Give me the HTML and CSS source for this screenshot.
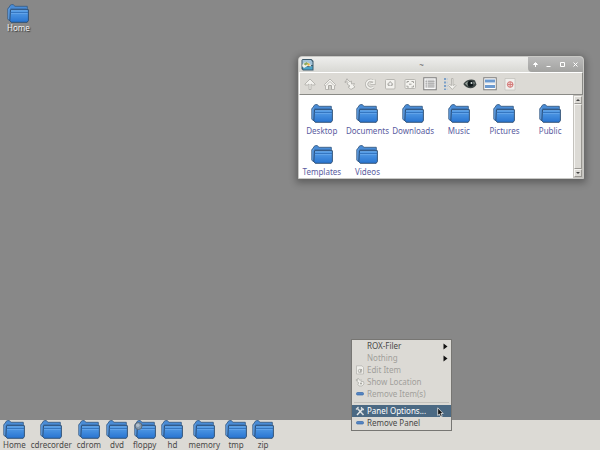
FILE: index.html
```html
<!DOCTYPE html>
<html lang="en">
<head>
<meta charset="utf-8">
<title>Desktop</title>
<link rel="stylesheet" href="styles.css">
</head>
<body>
<svg class="defs" aria-hidden="true">
  <defs>
    <linearGradient id="front" x1="0" y1="0" x2="0" y2="1">
      <stop offset="0" stop-color="#5aa2ea"/><stop offset="1" stop-color="#2874d0"/>
    </linearGradient>
    <symbol id="folder" viewBox="0 0 22 20">
      <path d="M2 16.500L.8 15V4.500L2 3.500 3 1.500 4.500.6h1.700L8 2.300h12.300V16z" fill="#4a8cd6" stroke="#3b5f86" stroke-width=".9"/>
      <path d="M1.800 15V5l1.400-1" fill="none" stroke="#6ca6e2" stroke-width=".8"/>
      <path d="M3.500 4.500h16" stroke="#3f78b8"/>
      <path d="M3.500 5.700h17.900v10.800l-1.200 1.800H4.200L2.800 16.500z" fill="url(#front)" stroke="#29486c" stroke-width=".9"/>
      <path d="M3.500 8.500h17.500" stroke="#2f6db6" stroke-width=".8"/>
      <path d="M4 9.500h16.500M4 6.700h16.500" stroke="#74b0f0" stroke-width=".8" opacity=".7"/>
    </symbol>
    <symbol id="minus" viewBox="0 0 8 4">
      <rect x=".5" y=".5" width="7" height="2.500" rx="1" fill="#5485c4" stroke="#3767a7" stroke-width=".7"/>
    </symbol>
  </defs>
</svg>

<main class="desktop">
  <a class="item pinned" href="#home"><svg class="folder"><use href="#folder"/></svg><span>Home</span></a>

  <section class="window">
    <header class="titlebar">
      <svg class="app-icon" viewBox="0 0 13 13">
        <path d="M.5 2.500l1-1.500h9l2 2v9.500H2L.5 11z" fill="#3c5a6c"/>
        <path d="M1.500 2h8.500l1.500 2v3h-10z" fill="#a3c3d8"/>
        <path d="M1.500 9.500l3-1.500 3 1 4-1v3.500h-9z" fill="#4aa3c8"/>
        <path d="M1 8c1-4 5-5 8-2l1.500 2.500-4-.5L3 10z" fill="#f1f1e8"/>
        <path d="M2.500 6l3-2 2 1.500-3 2z" fill="#8aa860"/>
        <circle cx="7.500" cy="6.500" r="1.200" fill="#e4b545"/>
      </svg>
      <h1 class="title">~</h1>
      <div class="controls">
        <button aria-label="Shade"><svg viewBox="0 0 7 7"><path d="M3.500 6V2M1.500 3.500l2-2 2 2z"/></svg></button>
        <button aria-label="Minimize"><svg viewBox="0 0 7 7"><path d="M1.500 5.500h4"/></svg></button>
        <button aria-label="Maximize"><svg viewBox="0 0 7 7"><path d="M1.500 1.500h4v4h-4z"/></svg></button>
        <button aria-label="Close"><svg viewBox="0 0 7 7"><path d="M1.500 1.500l4 4M5.500 1.500l-4 4"/></svg></button>
      </div>
    </header>

    <nav class="toolbar">
      <button aria-label="Up"><svg viewBox="0 0 14 14"><path class="pale" d="M7 2L2 7v1h2.500L6 7v5.500h2V7l1.500 1H12V7z"/></svg></button>
      <button aria-label="Home"><svg viewBox="0 0 14 14"><path class="pale" d="M7 2L1.500 7.500v1h1v4h9v-4h1v-1L7 2z"/><path d="M3 8.500l4-4 4 4" fill="none" stroke="#c0bfba"/><path d="M5.500 12.500v-4h3v4" fill="#d0cfca" stroke="#aaa9a4"/></svg></button>
      <button aria-label="Bookmarks"><svg viewBox="0 0 14 14"><path class="pale" d="M4 2l3 3 1.500-1v3l3-.5-1 2 1.500 1.500-4 2.500-3-2.500 2-1-3-2 1-1.500-2-2z"/><circle cx="4" cy="2.500" r="1" fill="#b5b4af"/><circle cx="2.500" cy="5" r="1" fill="#b5b4af"/></svg></button>
      <button aria-label="Rescan"><svg viewBox="0 0 14 14"><path d="M10 4A4 4 0 1 0 10.500 10M11 2.500v4H7.500" fill="none" stroke="#aeada8" stroke-width="3"/><path d="M10 4A4 4 0 1 0 10.500 10M11 2.500v4H7.500" fill="none" stroke="#f3f2ee" stroke-width="1.700"/></svg></button>
      <button aria-label="Icon size"><svg viewBox="0 0 14 14"><rect class="pale" x="2.500" y="2.500" width="9.500" height="9.500" rx="1"/><path d="M7.200 4l3 3-1 2H5.200l-1-2z" fill="#adaca7"/><path d="M7.200 5.500v3M5.700 7h3" stroke="#fff"/></svg></button>
      <button aria-label="Auto size"><svg viewBox="0 0 14 14"><rect class="pale" x="2" y="2.500" width="10.500" height="9" rx="1"/><path d="M4 6V4.500h2M8.500 4.500h2V6M10.500 8.500V10h-2M6 10H4V8.500M6 7.200h2.500" fill="none" stroke="#a3a29d"/></svg></button>
      <button aria-label="Details"><svg viewBox="0 0 14 14"><rect x=".75" y=".75" width="12.500" height="12" fill="#fafafa" stroke="#7d7d7d"/><path d="M2.500 2.500h9v8.500h-9z" fill="#ccc"/><path d="M2.500 4.500h9M2.500 6.700h9M2.500 9h9" stroke="#a2a2a2" stroke-width=".7"/><path d="M4.500 2.500V11" stroke="#e9e9e9" stroke-width=".7"/></svg></button>
      <button aria-label="Sort"><svg viewBox="0 0 14 14"><path d="M2 1v12" stroke="#7ca0c8" stroke-width="2" stroke-dasharray="2 1.500"/><path d="M4.200 1v12" stroke="#bccada" stroke-dasharray="2 1.500"/><path class="pale" d="M8.500 1.500h1.500v7l2-1 1 1-3.700 4-3.700-4 1-1 2 1z"/></svg></button>
      <button aria-label="Show hidden"><svg viewBox="0 0 14 14"><path d="M.3 7C3 2.500 9 1.500 12 3.500l1.500 4c-2 4.500-9 5.500-13.200-.5z" fill="#3d4645"/><path d="M2 6.500c3-3 7-3 10-.5-3 4-7 4-10 .5z" fill="#98a29c"/><circle cx="7.500" cy="6.800" r="3" fill="#10191b"/><circle cx="8.500" cy="6" r="1" fill="#d9e2df"/></svg></button>
      <button aria-label="Select all"><svg viewBox="0 0 14 14"><rect x=".75" y=".75" width="12.500" height="12" fill="#fff" stroke="#7d7d7d"/><path d="M2 4h10M2 9.500h10" stroke="#6c9acf" stroke-width="3"/><path d="M2 6.800h10" stroke="#e4e4e4"/></svg></button>
      <button aria-label="Help"><svg viewBox="0 0 14 14"><path d="M2 1.500h10v11.500H2z" fill="#f0efec" stroke="#c4c3be" stroke-width=".8"/><circle cx="7.200" cy="7.500" r="2.800" fill="#f3dedc" stroke="#d16f6f"/><path d="M4.500 7.500h5.500M7.200 5v5" stroke="#d37c79"/></svg></button>
    </nav>

    <div class="viewport">
      <div class="files">
        <a class="item" href="#desktop"><svg class="folder"><use href="#folder"/></svg><span>Desktop</span></a>
        <a class="item" href="#documents"><svg class="folder"><use href="#folder"/></svg><span>Documents</span></a>
        <a class="item" href="#downloads"><svg class="folder"><use href="#folder"/></svg><span>Downloads</span></a>
        <a class="item" href="#music"><svg class="folder"><use href="#folder"/></svg><span>Music</span></a>
        <a class="item" href="#pictures"><svg class="folder"><use href="#folder"/></svg><span>Pictures</span></a>
        <a class="item" href="#public"><svg class="folder"><use href="#folder"/></svg><span>Public</span></a>
        <a class="item" href="#templates"><svg class="folder"><use href="#folder"/></svg><span>Templates</span></a>
        <a class="item" href="#videos"><svg class="folder"><use href="#folder"/></svg><span>Videos</span></a>
      </div>
      <div class="scrollbar">
        <button aria-label="Scroll up"><svg viewBox="0 0 6 6"><path d="M1 4l2-2 2 2z"/></svg></button>
        <div class="thumb"></div>
        <button aria-label="Scroll down"><svg viewBox="0 0 6 6"><path d="M1 2l2 2 2-2z"/></svg></button>
      </div>
    </div>
  </section>

  <nav class="panel">
    <a class="item" href="#home"><svg class="folder"><use href="#folder"/></svg><span>Home</span></a>
    <a class="item" href="#cdrecorder"><svg class="folder"><use href="#folder"/></svg><span>cdrecorder</span></a>
    <a class="item" href="#cdrom"><svg class="folder"><use href="#folder"/></svg><span>cdrom</span></a>
    <a class="item" href="#dvd"><svg class="folder"><use href="#folder"/></svg><span>dvd</span></a>
    <a class="item" href="#floppy"><svg class="folder" viewBox="0 0 22 20"><use href="#folder" width="22" height="20"/><circle cx="4.500" cy="6" r="3.500" fill="#8199b0" stroke="#5f6b77"/><circle cx="3.800" cy="5.200" r="1.800" fill="#b0bdca"/></svg><span>floppy</span></a>
    <a class="item" href="#hd"><svg class="folder"><use href="#folder"/></svg><span>hd</span></a>
    <a class="item" href="#memory"><svg class="folder"><use href="#folder"/></svg><span>memory</span></a>
    <a class="item" href="#tmp"><svg class="folder"><use href="#folder"/></svg><span>tmp</span></a>
    <a class="item" href="#zip"><svg class="folder"><use href="#folder"/></svg><span>zip</span></a>
  </nav>

  <div class="menu">
    <button><i></i><span>ROX-Filer</span><svg class="arrow" viewBox="0 0 5 7"><path d="M.5 .5l4 3-4 3z"/></svg></button>
    <button class="off"><i></i><span>Nothing</span><svg class="arrow" viewBox="0 0 5 7"><path d="M.5 .5l4 3-4 3z"/></svg></button>
    <button class="off"><i><svg viewBox="0 0 10 10"><path d="M1.500 .8h5.500L8.500 2.500v6.500h-7z" fill="#f0efeb" stroke="#b7b6b1" stroke-width=".8"/><circle cx="5" cy="6" r="1.800" fill="none" stroke="#aaa9a4" stroke-width=".8"/><path d="M6.500 4L5 7" stroke="#989792"/></svg></i><span>Edit Item</span></button>
    <button class="off"><i><svg viewBox="0 0 10 10"><path d="M3 1l2 2.500 1-1v2l2.500 0L9 7 7 9H4L2.500 7 4 6 2 4.500z" fill="#efeeea" stroke="#b3b2ad" stroke-width=".8"/><circle cx="6" cy="6.500" r="1" fill="#a3a29d"/><circle cx="1.500" cy="3" r=".8" fill="#aaa9a4"/></svg></i><span>Show Location</span></button>
    <button class="off"><i><svg class="minus"><use href="#minus"/></svg></i><span>Remove Item(s)</span></button>
    <hr>
    <button class="active"><i><svg viewBox="0 0 10 10"><path d="M2 2l6.500 7" stroke="#d5dadd" stroke-width="1.600"/><path d="M8 2.500L2 9" stroke="#eceeed" stroke-width="1.400"/><path d="M1 3.500L3.500 1M6.500 1v2.500H9" fill="none" stroke="#d6dadd" stroke-width="1.300"/></svg></i><span>Panel Options...</span></button>
    <button><i><svg class="minus"><use href="#minus"/></svg></i><span>Remove Panel</span></button>
  </div>

  <svg class="cursor" viewBox="0 0 7 11"><path d="M.7 .8v7.700l1.700-1.500 1.300 3 1.500-.7-1.300-2.800h2.300z" fill="#111" stroke="#eee" stroke-width=".8"/></svg>
</main>
</body>
</html>
```
FILE: styles.css
```css
* { box-sizing: border-box; }

body {
  margin: 0;
  font: 8px/10px "Noto Sans", "DejaVu Sans", sans-serif;
  color: #484848;
}

.defs { position: absolute; width: 0; height: 0; }

button {
  margin: 0;
  padding: 0;
  border: 0;
  background: none;
  font: inherit;
  color: inherit;
}

svg { display: block; }

.desktop {
  position: relative;
  display: flex;
  flex-direction: column;
  justify-content: space-between;
  min-height: 100vh;
  background: #888;
  overflow: hidden;
}

.item {
  display: flex;
  flex-direction: column;
  align-items: center;
  color: inherit;
  text-decoration: none;
  white-space: nowrap;
}

.folder { width: 22px; height: 20px; }

.pinned {
  align-self: flex-start;
  padding: 4px 7px;
  color: #f4f4f4;
  text-shadow: 1px 1px 1px #333;
}

.pinned .folder { margin-bottom: -1px; }

/* Filer window */
.window {
  position: absolute;
  top: 56px;
  left: 298px;
  width: 286px;
  border: 1px solid #c8c8c5;
  border-radius: 4px 4px 0 0;
  background: #dcdad5;
  box-shadow: 0 2px 7px 2px rgba(0, 0, 0, .3);
}

.titlebar {
  display: flex;
  align-items: center;
  height: 15px;
  padding-left: 2px;
  border-radius: 3px 3px 0 0;
  background: linear-gradient(#eeeeec, #d8d8d4);
}

.app-icon { width: 13px; height: 13px; }

.title {
  flex: 1;
  margin: 0;
  padding-left: 1px;
  font: inherit;
  text-align: center;
  color: #666;
}

.controls {
  display: flex;
  align-self: stretch;
  align-items: center;
  justify-content: space-around;
  width: 55px;
  padding: 0 1px;
  border-radius: 0 3px 0 4px;
  background: linear-gradient(#bbb, #a3a3a1);
}

.controls svg {
  width: 7px;
  height: 7px;
  fill: none;
  stroke: #fff;
}

.toolbar {
  display: flex;
  align-items: center;
  height: 23px;
  border: 1px solid #8a8a86;
  border-top-color: #fff;
  border-left-color: #fff;
}

.toolbar button {
  display: grid;
  place-items: center;
  width: 20px;
  height: 20px;
}

.toolbar svg { width: 14px; height: 14px; }

.pale { fill: #f3f2ee; stroke: #b8b7b2; }

.viewport { display: flex; background: #fff; }

.files {
  flex: 1;
  display: grid;
  grid-template-columns: repeat(6, 1fr);
  row-gap: 9px;
  padding: 9px 0 1px;
  color: #5a5ca0;
}

.files .item { row-gap: 2px; }

.scrollbar {
  display: flex;
  flex-direction: column;
  width: 10px;
  padding: 1px;
  background: #c4c2bd;
}

.scrollbar button,
.thumb {
  border: 1px solid #999792;
  border-top-color: #f5f4f1;
  border-left-color: #f5f4f1;
  background: #dcdad5;
}

.scrollbar button { height: 8px; }
.scrollbar svg { width: 6px; height: 6px; fill: #444; }
.thumb { flex: 1; }

/* Bottom panel */
.panel {
  display: flex;
  gap: 5px;
  height: 30px;
  padding: 0 3px;
  background: #dcdad5;
}

/* Context menu */
.menu {
  position: absolute;
  top: 339px;
  left: 351px;
  width: 101px;
  padding-bottom: 1px;
  border: 1px solid #777673;
  background: #dcdad5;
}

.menu button {
  display: flex;
  align-items: center;
  width: 100%;
  height: 12px;
  padding: 0 3px;
  text-align: left;
}

.menu i { flex: none; width: 12px; }
.menu i svg { width: 10px; height: 10px; }
.menu i .minus { width: 8px; height: 4px; margin-left: 1px; }
.menu span { flex: 1; white-space: nowrap; }
.menu .arrow { width: 5px; height: 7px; fill: #111; }
.menu .off { color: #a1a09b; }
.menu .active { background: #4b6983; color: #fff; }

.menu hr {
  height: 1px;
  margin: 2px;
  border: 0;
  background: #c4c2bd;
}

.cursor {
  position: absolute;
  top: 407px;
  left: 437px;
  width: 7px;
  height: 11px;
}
```
